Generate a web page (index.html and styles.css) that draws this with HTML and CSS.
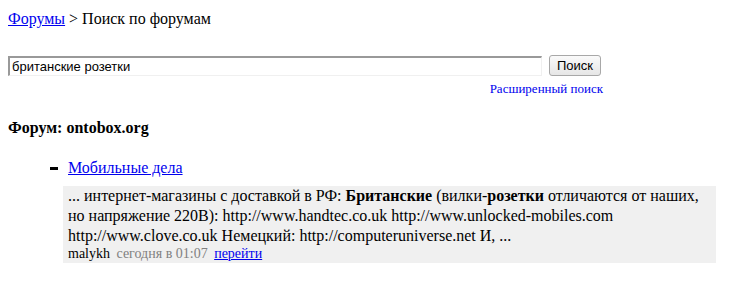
FILE: index.html
```html
<!DOCTYPE html>
<html lang="ru">
<head>
  <meta charset="UTF-8">
  <title>Поиск по форумам</title>
  <link rel="stylesheet" href="styles.css">
</head>
<body>
  <div class="crumbs"><a href="#">Форумы</a> &gt; Поиск по форумам</div>

  <form class="search">
    <div class="search-row">
      <input type="text" class="search-input" value="британские розетки">
      <button type="button" class="search-btn">Поиск</button>
    </div>
    <div class="advanced"><a href="#">Расширенный поиск</a></div>
  </form>

  <h3 class="forum">Форум: ontobox.org</h3>

  <ul class="results">
    <li class="result">
      <div class="result-title"><span class="dash"></span><a href="#">Мобильные дела</a></div>
      <div class="snippet">
        <div class="snippet-text">... интернет-магазины с доставкой в РФ: <b>Британские</b> (вилки-<b>розетки</b> отличаются от наших, но напряжение 220В): http://www.handtec.co.uk http://www.unlocked-mobiles.com http://www.clove.co.uk Немецкий: http://computeruniverse.net И, ...</div>
        <div class="meta">
          <span class="author">malykh</span>
          <span class="date">сегодня в 01:07</span>
          <a href="#">перейти</a>
        </div>
      </div>
    </li>
  </ul>
</body>
</html>
```

FILE: styles.css
```css
body { font-family: "Liberation Serif", serif; font-size: 16px; margin: 0; padding: 10px 8px; color: #000; background: #fff; }
a { color: #0000ee; }
.crumbs { line-height: 18px; }

.search { width: 595px; margin-top: 27px; }
.search-row { display: flex; align-items: center; gap: 7px; width: 593px; }
.search-input { flex: 1; height: 20px; box-sizing: border-box; margin: 0; padding: 0 2px;
                font: 13px "Liberation Sans", sans-serif; color: #000;
                border: 2px solid; border-color: #999 #f0f0f0 #f0f0f0 #999; border-width: 2px 1px 1px 2px; }
.search-btn { height: 21px; padding: 0 7px; margin: 0; font: 13px "Liberation Sans", sans-serif; color: #000;
              background: linear-gradient(#fafafa, #e6e6e6); border: 1px solid #a8a8a8; border-radius: 3px; }
.advanced { text-align: right; font-size: 13px; margin-top: 5px; }
.advanced a { text-decoration: none; }

.forum { font-size: 16px; margin: 22px 0 0; }

.results { list-style: none; margin: 22px 0 0; padding: 0 0 0 42px; }
.result-title { display: flex; align-items: center; gap: 10px; line-height: 18px; }
.dash { width: 8px; height: 3px; background: #000; }
.snippet { background: #f0f0f0; margin: 9px 0 0 13px; padding: 0 5px 2px; width: 643px; }
.snippet-text { line-height: 20px; }
.meta { font-size: 14px; line-height: 15px; margin-top: 0; }
.author { color: #000; margin-right: 3px; }
.date { color: #808080; margin-right: 3px; }
```
